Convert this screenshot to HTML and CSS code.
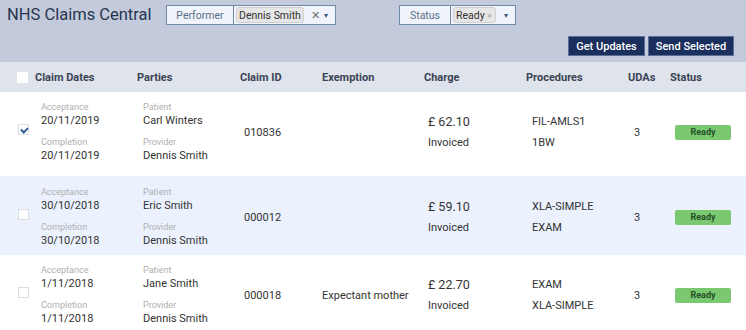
FILE: index.html
```html
<!DOCTYPE html>
<html lang="en">
<head>
    <meta charset="UTF-8">
    <meta name="viewport" content="width=device-width, initial-scale=1.0">
    <title>NHS Claims Central</title>
    <link rel="stylesheet" href="styles.css">
</head>
<body>

<div id="topbar">
    <div class="topbar-row">
        <h1 class="app-title">NHS Claims Central</h1>

        <!-- Filters -->
        <div class="filter filter-performer">
            <div class="filter-label">Performer</div>
            <div class="filter-value">
                <span class="chip">Dennis Smith</span>
                <span class="clear">&#x2715;</span>
                <span class="caret">&#9662;</span>
            </div>
        </div>

        <div class="filter filter-status">
            <div class="filter-label">Status</div>
            <div class="filter-value">
                <span class="chip">Ready<span class="chip-x">&#x2715;</span></span>
                <span class="caret">&#9662;</span>
            </div>
        </div>
    </div>

    <div class="topbar-actions">
        <button class="btn">Get Updates</button>
        <button class="btn btn-wide">Send Selected</button>
    </div>
</div>

<div id="claims">
    <div class="claims-head">
        <div class="col-check"><span class="checkbox checkbox-head"></span></div>
        <div>Claim Dates</div>
        <div>Parties</div>
        <div>Claim ID</div>
        <div>Exemption</div>
        <div>Charge</div>
        <div>Procedures</div>
        <div>UDAs</div>
        <div>Status</div>
    </div>

    <div class="claim-row row-first">
        <div class="col-check"><span class="checkbox checked"></span></div>
        <div class="cell cell-dates">
            <div class="label">Acceptance</div>
            <div class="value">20/11/2019</div>
            <div class="label label-gap">Completion</div>
            <div class="value">20/11/2019</div>
        </div>
        <div class="cell cell-parties">
            <div class="label">Patient</div>
            <div class="value">Carl Winters</div>
            <div class="label label-gap">Provider</div>
            <div class="value">Dennis Smith</div>
        </div>
        <div class="cell cell-id">010836</div>
        <div class="cell cell-exempt"></div>
        <div class="cell cell-charge">
            <div class="amount">&pound; 62.10</div>
            <div class="sub">Invoiced</div>
        </div>
        <div class="cell cell-proc">
            <div class="amount-line">FIL-AMLS1</div>
            <div class="sub">1BW</div>
        </div>
        <div class="cell cell-uda">3</div>
        <div class="cell cell-status"><span class="badge">Ready</span></div>
    </div>

    <div class="claim-row row-alt">
        <div class="col-check"><span class="checkbox"></span></div>
        <div class="cell cell-dates">
            <div class="label">Acceptance</div>
            <div class="value">30/10/2018</div>
            <div class="label label-gap">Completion</div>
            <div class="value">30/10/2018</div>
        </div>
        <div class="cell cell-parties">
            <div class="label">Patient</div>
            <div class="value">Eric Smith</div>
            <div class="label label-gap">Provider</div>
            <div class="value">Dennis Smith</div>
        </div>
        <div class="cell cell-id">000012</div>
        <div class="cell cell-exempt"></div>
        <div class="cell cell-charge">
            <div class="amount">&pound; 59.10</div>
            <div class="sub">Invoiced</div>
        </div>
        <div class="cell cell-proc">
            <div class="amount-line">XLA-SIMPLE</div>
            <div class="sub">EXAM</div>
        </div>
        <div class="cell cell-uda">3</div>
        <div class="cell cell-status"><span class="badge">Ready</span></div>
    </div>

    <div class="claim-row">
        <div class="col-check"><span class="checkbox"></span></div>
        <div class="cell cell-dates">
            <div class="label">Acceptance</div>
            <div class="value">1/11/2018</div>
            <div class="label label-gap">Completion</div>
            <div class="value">1/11/2018</div>
        </div>
        <div class="cell cell-parties">
            <div class="label">Patient</div>
            <div class="value">Jane Smith</div>
            <div class="label label-gap">Provider</div>
            <div class="value">Dennis Smith</div>
        </div>
        <div class="cell cell-id">000018</div>
        <div class="cell cell-exempt">Expectant mother</div>
        <div class="cell cell-charge">
            <div class="amount">&pound; 22.70</div>
            <div class="sub">Invoiced</div>
        </div>
        <div class="cell cell-proc">
            <div class="amount-line">EXAM</div>
            <div class="sub">XLA-SIMPLE</div>
        </div>
        <div class="cell cell-uda">3</div>
        <div class="cell cell-status"><span class="badge">Ready</span></div>
    </div>
</div>

</body>
</html>
```

FILE: styles.css
```css
body {
    margin: 0;
    background-color: #fff;
    font-family: Roboto, 'Liberation Sans', Arial, sans-serif;
    color: #333;
}

#topbar {
    background-color: #c3cadb;
    height: 62px;
    box-sizing: border-box;
    padding-top: 5px;
}

.topbar-row {
    display: flex;
    align-items: flex-start;
    height: 20px;
}

.app-title {
    margin: 0 0 0 7px;
    font-size: 16.5px;
    font-weight: normal;
    line-height: 20px;
    color: #283650;
    width: 159px;
    white-space: nowrap;
}

.filter {
    display: flex;
    height: 20px;
    box-sizing: border-box;
    border: 1px solid #6f8ba8;
    background-color: #f0f4fa;
    font-size: 10.5px;
}

.filter-performer {
    width: 170px;
}

.filter-status {
    width: 117px;
    margin-left: 63px;
}

.filter-label {
    display: flex;
    align-items: center;
    justify-content: center;
    border-right: 1px solid #6f8ba8;
    color: #587089;
    flex-shrink: 0;
}

.filter-performer .filter-label {
    width: 66px;
}

.filter-status .filter-label {
    width: 50px;
}

.filter-value {
    flex: 1;
    display: flex;
    align-items: center;
    padding-left: 2px;
}

.chip {
    display: inline-flex;
    align-items: center;
    height: 14px;
    padding: 0 2px;
    background-color: #e6e6e6;
    border: 1px solid #d0d0d0;
    border-radius: 3px;
    color: #333;
    font-size: 10.5px;
    white-space: nowrap;
}

.chip-x {
    font-size: 6px;
    color: #999;
    margin-left: 2px;
    margin-right: 1px;
}

.clear {
    margin-left: 7px;
    font-size: 11px;
    color: #6b6b6b;
}

.caret {
    margin-left: auto;
    margin-right: 7px;
    font-size: 8px;
    color: #3d5a7e;
}

.topbar-actions {
    display: flex;
    justify-content: flex-end;
    gap: 3px;
    margin-top: 11px;
    padding-right: 12px;
}

.btn {
    height: 20px;
    width: 77px;
    padding: 0;
    border: 1px solid #5c6e94;
    background-color: #1b2f5e;
    color: #fff;
    font-family: Roboto, 'Liberation Sans', Arial, sans-serif;
    font-size: 11px;
    font-weight: 500;
}

.btn-wide {
    width: 86px;
}

/* Claims table */

.claims-head,
.claim-row {
    display: grid;
    grid-template-columns: 35px 102px 103px 82px 102px 102px 102px 42px 1fr;
}

.claims-head {
    height: 30px;
    align-items: center;
    background-color: #dfe3ec;
    font-size: 11px;
    font-weight: bold;
    color: #3b4455;
}

.col-check {
    display: flex;
    align-items: center;
    padding-left: 17px;
}

.checkbox {
    display: inline-block;
    width: 11px;
    height: 11px;
    box-sizing: border-box;
    background-color: #fff;
    border: 1px solid #d8dde6;
    position: relative;
}

.checkbox-head {
    border-color: #fff;
}

.checkbox.checked::after {
    content: '';
    position: absolute;
    left: 3px;
    top: 1px;
    width: 3px;
    height: 5px;
    border: solid #2f5f96;
    border-width: 0 2px 2px 0;
    transform: rotate(45deg);
}

.claim-row {
    align-items: center;
    padding: 9px 0 7px;
    border-bottom: 1px solid #eceff3;
    font-size: 11px;
    color: #333;
}

.claim-row .col-check {
    padding-left: 18px;
    margin-top: -5px;
}

.row-first {
    padding-bottom: 13px;
}

.row-alt {
    background-color: #ebf2fd;
    border-bottom: none;
}

.cell {
    padding-left: 6px;
}

.label {
    font-size: 9px;
    line-height: 12px;
    color: #b0b0b0;
}

.label-gap {
    margin-top: 8px;
}

.value {
    line-height: 15px;
}

.cell-id {
    padding-left: 4px;
}

.cell-exempt {
    padding-left: 0;
}

.cell-charge {
    padding-left: 4px;
}

.amount {
    font-size: 12.5px;
    line-height: 16px;
}

.amount-line {
    line-height: 16px;
}

.sub {
    margin-top: 6px;
    line-height: 14px;
}

.cell-status {
    padding-left: 5px;
}

.badge {
    display: block;
    width: 56px;
    height: 15px;
    line-height: 15px;
    text-align: center;
    background-color: #7ac86f;
    border-radius: 2px;
    color: #27522a;
    font-size: 9px;
    font-weight: bold;
}
```
